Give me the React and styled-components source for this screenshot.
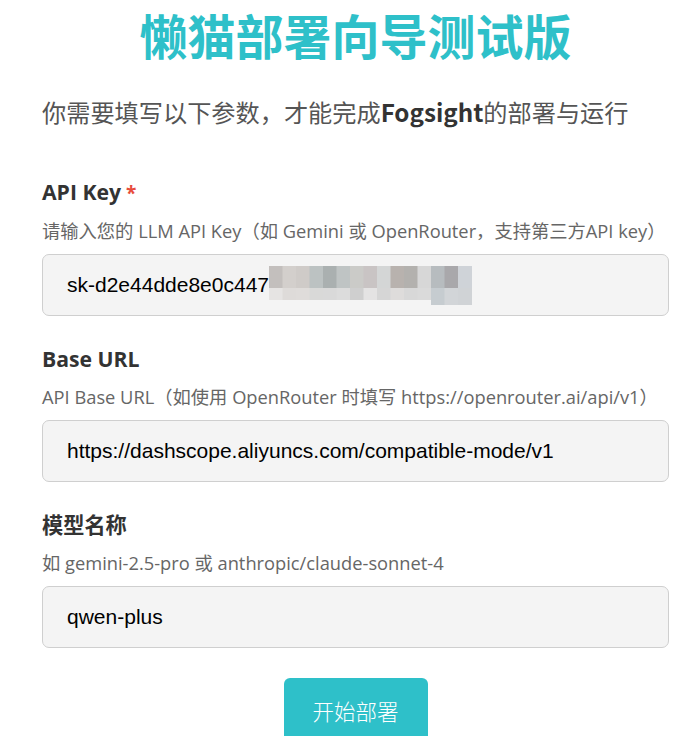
import React from "react";
import styled, { createGlobalStyle } from "styled-components";

const Global = createGlobalStyle`
  html, body { margin: 0; padding: 0; background: #fff; }
  body { font-family: "Open Sans", "Noto Sans CJK SC", sans-serif; }
`;

const Page = styled.div`
  width: 627px;
  padding: 0 23px 0 42px;
  display: flex;
  flex-direction: column;
`;

const Title = styled.h1`
  margin: 4px 0 0;
  text-align: center;
  font-family: "Noto Sans CJK SC", sans-serif;
  font-size: 48px;
  line-height: 60px;
  font-weight: 700;
  color: #2ec0c9;
`;

const Intro = styled.p`
  margin: 32px 0 0;
  font-family: "Noto Sans CJK SC", sans-serif;
  font-size: 24.2px;
  line-height: 32px;
  color: #555;
  b { color: #333; font-weight: 700; }
`;

const Field = styled.div`
  display: flex;
  flex-direction: column;
  margin-top: ${(p) => p.$top}px;
`;

const Label = styled.label`
  font-size: 21.2px;
  line-height: 28px;
  font-weight: 700;
  color: #333;
`;

const Required = styled.span`
  color: #e74c3c;
  margin-left: 5px;
  font-size: 19px;
`;

const Hint = styled.div`
  margin-top: 12px;
  font-size: 18.3px;
  line-height: 24px;
  color: #666;
`;

const InputBox = styled.div`
  margin-top: 11px;
  height: 62px;
  box-sizing: border-box;
  border: 1px solid #cfcfcf;
  border-radius: 7px;
  background: #f4f4f4;
  padding: 0 24px;
  display: flex;
  align-items: center;
  font-family: "Liberation Sans", Arial, sans-serif;
  font-size: 21px;
  color: #000;
`;

const Mosaic = styled.svg`
  display: block;
  margin-top: 2px;
`;

const Footer = styled.div`
  display: flex;
  justify-content: center;
  margin-top: 30px;
`;

const Button = styled.button`
  width: 144px;
  height: 64px;
  border: none;
  border-radius: 6px;
  background: #2ec0c9;
  color: #fff;
  font-family: "Noto Sans CJK SC", sans-serif;
  font-weight: 300;
  font-size: 21.5px;
  padding: 0;
`;

const topRow = ["#c3bfbd","#d3cfcc","#cfcbc8","#bcc2c2","#aab0b0","#bfc4c4","#cbcbc8","#c9c4c4","#d4d6d6","#b8b2ae","#b3b1ae","#d7d7d7","#b7bcbf","#a9a8ab","#cfd3d8"];
const botRow = ["#e6e4e3","#dedbd9","#dfdcda","#d9d9d8","#d9d9d9","#dcdcdc","#cfcfcf","#e4e3e3","#d6d6d6","#dedcdb","#d8d8d8","#dadada","#c6ccd0","#d2d5d8","#d0d3d6"];

function KeyMosaic() {
  const w = 13.5;
  return (
    <Mosaic width="204" height="40" viewBox="0 0 204 40">
      {topRow.map((c, i) => (
        <rect key={"t" + i} x={i * w} y="0" width={w + 0.5} height="22" fill={c} />
      ))}
      {botRow.map((c, i) => (
        <rect key={"b" + i} x={i * w} y="22" width={w + 0.5} height={i > 11 ? 17 : 12} fill={c} />
      ))}
    </Mosaic>
  );
}

export default function App() {
  return (
    <>
      <Global />
      <Page>
        <Title>懒猫部署向导测试版</Title>
        <Intro>
          你需要填写以下参数，才能完成<b>Fogsight</b>的部署与运行
        </Intro>

        <Field $top={50}>
          <Label>
            API Key<Required>*</Required>
          </Label>
          <Hint>请输入您的 LLM API Key（如 Gemini 或 OpenRouter，支持第三方API key）</Hint>
          <InputBox>
            sk-d2e44dde8e0c447
            <KeyMosaic />
          </InputBox>
        </Field>

        <Field $top={29}>
          <Label>Base URL</Label>
          <Hint>API Base URL（如使用 OpenRouter 时填写 https://openrouter.ai/api/v1）</Hint>
          <InputBox>https://dashscope.aliyuncs.com/compatible-mode/v1</InputBox>
        </Field>

        <Field $top={29}>
          <Label>模型名称</Label>
          <Hint>如 gemini-2.5-pro 或 anthropic/claude-sonnet-4</Hint>
          <InputBox>qwen-plus</InputBox>
        </Field>

        <Footer>
          <Button>开始部署</Button>
        </Footer>
      </Page>
    </>
  );
}
